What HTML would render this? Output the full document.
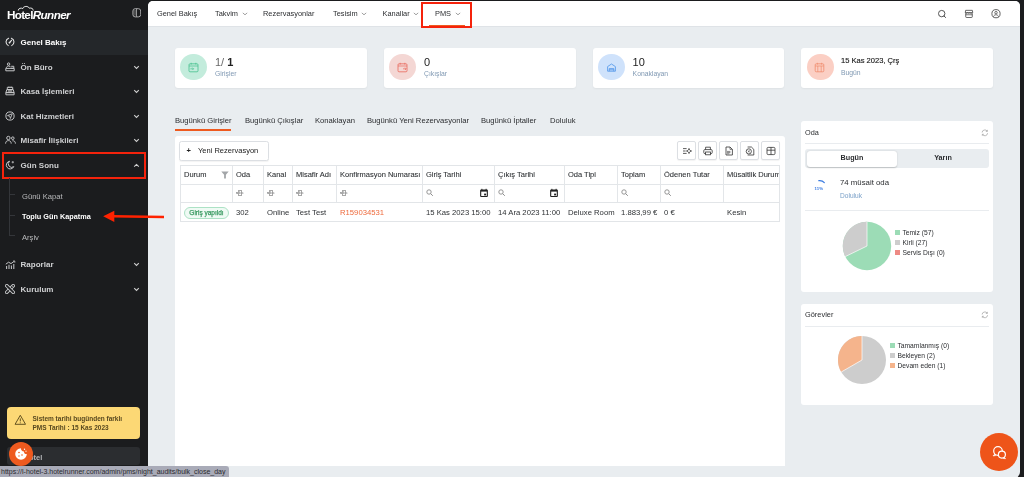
<!DOCTYPE html>
<html lang="tr">
<head>
<meta charset="utf-8">
<title>HotelRunner</title>
<style>
*{box-sizing:border-box;margin:0;padding:0}
html,body{width:1024px;height:477px;overflow:hidden;background:#1b1c1e;font-family:"Liberation Sans",sans-serif;}
.abs{position:absolute}
#side{will-change:transform;position:absolute;left:0;top:0;width:148px;height:477px;background:#1b1c1e;color:#e9e9ea}
#main{will-change:transform;position:absolute;left:148px;top:1px;width:872px;height:477px;background:#e9edf0;border-radius:5px 5px 6px 0;overflow:hidden}
#topbar{position:absolute;left:0;top:0;width:872px;height:26px;background:#fff;border-bottom:1px solid #dfe3e7}
.nav{position:absolute;top:7.7px;font-size:7.4px;color:#2b2d30;white-space:nowrap;line-height:10px}
.nav .cv{display:inline-block;margin-left:3.5px;color:#666}
.mi{position:absolute;left:0;width:148px;height:24px;font-size:8px;font-weight:bold;color:#cfd0d2;line-height:24px;padding-left:20.600px;white-space:nowrap}
.mi svg.ic{position:absolute;left:5px;top:6.5px}
.mi svg.ch{position:absolute;left:132.800px;top:9.200px}
.sub{position:absolute;left:22px;font-size:7.6px;color:#b9babc;line-height:10px;white-space:nowrap}
.card{position:absolute;top:47px;width:192px;height:40px;background:#fff;border-radius:3px;box-shadow:0 1px 2px rgba(0,0,0,.05)}
.card .circ{position:absolute;left:5.4px;top:5.6px;width:26.6px;height:26.6px;border-radius:50%}
.card .big{position:absolute;left:40px;top:8px;font-size:11px;line-height:12px;color:#222;white-space:nowrap}
.card .sm{position:absolute;left:40px;top:22px;font-size:6.8px;line-height:8px;color:#8099b3;white-space:nowrap}
.tab{position:absolute;top:115px;font-size:7.65px;line-height:10px;color:#2b2d30;white-space:nowrap}
.panel{position:absolute;background:#fff;border-radius:3px}
table{border-collapse:collapse}
.th,.td{position:absolute;font-size:7.5px;color:#2e3134;-webkit-text-stroke:0.08px #2e3134;white-space:nowrap;line-height:10px}
.vl{position:absolute;width:1px;background:#e3e6e9}
.hl{position:absolute;height:1px;background:#e3e6e9}
.btn{position:absolute;top:140.3px;width:15px;height:15px;border:1px solid #dcdfe3;border-radius:2px;background:#fff;box-shadow:0 1px 1px rgba(0,0,0,.05)}
.lg{position:absolute;font-size:6.7px;line-height:8px;color:#2b2d30;white-space:nowrap}
.lg i{display:inline-block;width:4.8px;height:4.8px;margin-right:2.7px;vertical-align:0.2px}
.td{font-size:7.7px;-webkit-text-stroke:0}
</style>
</head>
<body>
<div id="side">
  <!-- logo -->
  <div class="abs" style="left:7px;top:8px;font-size:11.7px;line-height:14px;font-weight:bold;color:#fff;letter-spacing:-0.7px;white-space:nowrap">Hotel<span style="font-style:italic;letter-spacing:-0.6px">Runner</span></div>
  <svg class="abs" style="left:16.5px;top:5px" width="17.5" height="6" viewBox="0 0 14 6" preserveAspectRatio="none"><path d="M1 5.5 C1 3.2 3.5 2.6 4.6 3.6 C5 1 9 0.6 9.8 3.2 C11.5 2.6 13 3.6 13 5.5" fill="none" stroke="#fff" stroke-width="0.8"/></svg>
  <svg class="abs" style="left:131.500px;top:8.400px" width="9.600" height="9.600" viewBox="0 0 9.600 9.600"><rect x="0.900" y="0.700" width="7.800" height="8.200" rx="2.300" fill="none" stroke="#b9b9ba" stroke-width="0.900"/><path d="M4.500 0.800v8" stroke="#b9b9ba" stroke-width="0.800"/><path d="M1.400 2h2.700v5.600H1.400z" fill="#b9b9ba" opacity=".3"/></svg>

  <div class="abs" style="left:0;top:30px;width:148px;height:24.700px;background:#24272a"></div>
  <div class="mi" style="top:30.8px;color:#fff">
    <svg class="ic" width="10" height="10" viewBox="0 0 10 10"><path d="M3.300 8.600A4 4 0 0 1 3.600 1.250M6.400 1.250A4 4 0 0 1 6.700 8.600" fill="none" stroke="#e6e6e6" stroke-width="1.050" stroke-linecap="round"/><path d="M4.500 5.700L6.500 3.300" stroke="#e6e6e6" stroke-width="1.200" stroke-linecap="round"/><circle cx="4.500" cy="5.600" r=".9" fill="#e6e6e6"/></svg>
    Genel Bakış</div>
  <div class="mi" style="top:55.8px">
    <svg class="ic" width="10" height="10" viewBox="0 0 10 10"><circle cx="3.6" cy="2.1" r="1.2" fill="none" stroke="#c4c5c7" stroke-width="1"/><path d="M1.2 6.3c.2-1.6 1.2-2.3 2.4-2.3 1 0 1.8.5 2.2 1.3M6.2 4.3h2.6v2H6.2M0.8 6.4h8.4v2.4H0.800z" fill="none" stroke="#c4c5c7" stroke-width="1"/></svg>
    Ön Büro<svg class="ch" width="7" height="5" viewBox="0 0 7 5"><path d="M1.2 1.2l2.3 2.2 2.300-2.200" fill="none" stroke="#d0d0d0" stroke-width="1.100"/></svg></div>
  <div class="mi" style="top:79.8px">
    <svg class="ic" width="10" height="10" viewBox="0 0 10 10"><path d="M2.300 1.300h5.400v2.300H2.300zM1.800 3.600h6.400l.9 3H.9zM.9 6.600h8.200v2.200H.9z" fill="none" stroke="#c4c5c7" stroke-width="1"/><path d="M3.600 .6v1.400M5 .6v1.400M6.400 .6v1.400" stroke="#c4c5c7" stroke-width=".7"/><path d="M3 4.600h4M2.800 5.600h4.400" stroke="#cfcfcf" stroke-width="0.600"/></svg>
    Kasa İşlemleri<svg class="ch" width="7" height="5" viewBox="0 0 7 5"><path d="M1.2 1.2l2.3 2.2 2.300-2.200" fill="none" stroke="#d0d0d0" stroke-width="1.100"/></svg></div>
  <div class="mi" style="top:104.8px">
    <svg class="ic" width="10" height="10" viewBox="0 0 10 10"><circle cx="5" cy="5" r="4.100" fill="none" stroke="#c4c5c7" stroke-width="1"/><path d="M7.300 2.700L2.500 4.600l2.300.6.600 2.300z" fill="none" stroke="#c4c5c7" stroke-width=".9" stroke-linejoin="round"/></svg>
    Kat Hizmetleri<svg class="ch" width="7" height="5" viewBox="0 0 7 5"><path d="M1.2 1.2l2.3 2.2 2.300-2.200" fill="none" stroke="#d0d0d0" stroke-width="1.100"/></svg></div>
  <div class="mi" style="top:128.8px">
    <svg class="ic" width="11" height="10" viewBox="0 0 11 10"><circle cx="3.400" cy="3" r="1.700" fill="none" stroke="#c4c5c7" stroke-width="1"/><path d="M.6 8.600c0-2 1.200-3 2.800-3s2.800 1 2.800 3" fill="none" stroke="#c4c5c7" stroke-width="1"/><circle cx="7.800" cy="3.200" r="1.300" fill="none" stroke="#c4c5c7" stroke-width="1"/><path d="M7.400 5.800c1.800-.3 3 .8 3 2.800" fill="none" stroke="#c4c5c7" stroke-width="1"/></svg>
    Misafir İlişkileri<svg class="ch" width="7" height="5" viewBox="0 0 7 5"><path d="M1.2 1.2l2.3 2.200 2.300-2.200" fill="none" stroke="#d0d0d0" stroke-width="1.100"/></svg></div>
  <div class="mi" style="top:153.8px">
    <svg class="ic" width="10" height="10" viewBox="0 0 10 10"><path d="M4.600 1.200a3.900 3.900 0 1 0 4.200 5.400 3.300 3.300 0 0 1-4.200-5.400z" fill="none" stroke="#c4c5c7" stroke-width="1" stroke-linejoin="round"/><path d="M7.800 1v2.400M6.600 2.200H9" stroke="#cfcfcf" stroke-width="0.700"/></svg>
    Gün Sonu<svg class="ch" width="7" height="5" viewBox="0 0 7 5"><path d="M1.200 3.600l2.300-2.200 2.300 2.200" fill="none" stroke="#d0d0d0" stroke-width="1.100"/></svg></div>
  <!-- red annotation box -->
  <div class="abs" style="left:1.5px;top:152px;width:144.5px;height:27px;border:2.200px solid #f5230c"></div>

  <!-- submenu -->
  <div class="abs" style="left:9px;top:178px;width:1px;height:57px;background:#34363a"></div>
  <div class="abs" style="left:9px;top:194px;width:6px;height:1px;background:#34363a"></div>
  <div class="abs" style="left:9px;top:215px;width:6px;height:1px;background:#34363a"></div>
  <div class="abs" style="left:9px;top:235px;width:6px;height:1px;background:#34363a"></div>
  <div class="sub" style="top:191.8px">Günü Kapat</div>
  <div class="sub" style="top:212px;font-size:7.3px;color:#fff;font-weight:bold">Toplu Gün Kapatma</div>
  <div class="sub" style="top:232.6px">Arşiv</div>

  <div class="mi" style="top:253.2px">
    <svg class="ic" width="11" height="10" viewBox="0 0 11 10"><path d="M.8 4.200l2.800-2 2.400 1.400 3.400-2.400" fill="none" stroke="#c4c5c7" stroke-width="1"/><path d="M1.600 6v3M4 4.800v4.200M6.400 5.600V9M8.800 4v5" stroke="#c4c5c7" stroke-width="1.05"/><path d="M8 1h1.800v1.800" fill="none" stroke="#cfcfcf" stroke-width="0.700"/></svg>
    Raporlar<svg class="ch" width="7" height="5" viewBox="0 0 7 5"><path d="M1.200 1.200l2.300 2.200 2.300-2.200" fill="none" stroke="#d0d0d0" stroke-width="1.100"/></svg></div>
  <div class="mi" style="top:277.8px">
    <svg class="ic" width="10" height="10" viewBox="0 0 10 10"><rect x="3.700" y="-0.900" width="2.600" height="11.800" rx="1.100" transform="rotate(45 5 5)" fill="#1b1c1e" stroke="#c4c5c7" stroke-width="0.950"/><rect x="3.700" y="-0.900" width="2.600" height="11.800" rx="1.100" transform="rotate(-45 5 5)" fill="#1b1c1e" stroke="#c4c5c7" stroke-width="0.950"/><path d="M6.600 1.400l2 2" stroke="#c4c5c7" stroke-width=".8"/></svg>
    Kurulum<svg class="ch" width="7" height="5" viewBox="0 0 7 5"><path d="M1.200 1.200l2.300 2.200 2.300-2.200" fill="none" stroke="#d0d0d0" stroke-width="1.100"/></svg></div>

  <!-- warning -->
  <div class="abs" style="left:7px;top:407px;width:132.600px;height:32px;background:#fcd875;border-radius:4px"></div>
  <svg class="abs" style="left:13.500px;top:414.300px" width="12.600" height="11.600" viewBox="0 0 12 11"><path d="M6 1.200L11 9.800H1z" fill="none" stroke="#5a4a1c" stroke-width="0.900" stroke-linejoin="round"/><path d="M6 4.200v2.800M6 8v.8" stroke="#5a4a1c" stroke-width="0.900"/></svg>
  <div class="abs" style="left:32.500px;top:414px;font-size:6.5px;line-height:9px;font-weight:bold;color:#57481f;white-space:nowrap">Sistem tarihi bugünden farklı<br>PMS Tarihi : 15 Kas 2023</div>

  <!-- hotel box -->
  <div class="abs" style="left:7px;top:447px;width:133px;height:18px;background:#2b2d30;border-radius:3px"></div>
  <div class="abs" style="left:23.5px;top:453px;font-size:7.500px;line-height:10px;font-weight:bold;color:#b5b6b8;white-space:nowrap">Hotel</div>
  <!-- cookie button -->
  <div class="abs" style="left:9px;top:442px;width:24px;height:24px;border-radius:50%;background:#ee5a1f"></div>
  <svg class="abs" style="left:14px;top:447px" width="14" height="14" viewBox="0 0 14 14"><path d="M7 1.200a5.800 5.800 0 1 0 5.800 5.800 2.600 2.600 0 0 1-2.800-2.600A2.800 2.800 0 0 1 7 1.200z" fill="#fff"/><circle cx="5" cy="5.500" r=".8" fill="#ee5a1f"/><circle cx="8" cy="8" r=".8" fill="#ee5a1f"/><circle cx="5" cy="9" r=".7" fill="#ee5a1f"/><circle cx="10.500" cy="2.200" r=".7" fill="#fff"/><circle cx="12" cy="4.200" r=".6" fill="#fff"/></svg>
</div>

<div id="main">
  <div id="topbar">
    <div class="nav" style="left:9px">Genel Bakış</div>
    <div class="nav" style="left:67px">Takvim<span class="cv"><svg width="6" height="4" viewBox="0 0 6 4"><path d="M.8 .9l2.200 1.900L5.200 .9" fill="none" stroke="#777" stroke-width=".7"/></svg></span></div>
    <div class="nav" style="left:115px">Rezervasyonlar</div>
    <div class="nav" style="left:185px">Tesisim<span class="cv"><svg width="6" height="4" viewBox="0 0 6 4"><path d="M.8 .9l2.200 1.900L5.200 .9" fill="none" stroke="#777" stroke-width=".7"/></svg></span></div>
    <div class="nav" style="left:234.500px">Kanallar<span class="cv"><svg width="6" height="4" viewBox="0 0 6 4"><path d="M.8 .9l2.200 1.900L5.200 .9" fill="none" stroke="#777" stroke-width=".7"/></svg></span></div>
    <div class="nav" style="left:287px">PMS<span class="cv"><svg width="6" height="4" viewBox="0 0 6 4"><path d="M.8 .9l2.200 1.900L5.200 .9" fill="none" stroke="#777" stroke-width=".7"/></svg></span></div>
    <div class="abs" style="left:281px;top:23.7px;width:35.5px;height:1.500px;background:#ee5a1f"></div>
    <!-- right icons -->
    <svg class="abs" style="left:789px;top:8px" width="10" height="10" viewBox="0 0 10 10"><circle cx="4.700" cy="4.600" r="3.200" fill="none" stroke="#3a3a3a" stroke-width=".85"/><path d="M7 7l1.600 1.500" stroke="#3a3a3a" stroke-width=".9" stroke-linecap="round"/></svg>
    <svg class="abs" style="left:816px;top:7.600px" width="10" height="9.600" viewBox="0 0 10 10"><path d="M1.500 1.400h7l.4 2.400H1.100z" fill="none" stroke="#3a3a3a" stroke-width=".8" stroke-linejoin="round"/><path d="M1.300 3.900c.6.800 1.700.8 2.300 0 .6.800 1.700.8 2.300 0 .6.800 1.700.8 2.300 0" fill="none" stroke="#3a3a3a" stroke-width=".7"/><path d="M1.600 4.400v3.800c0 .4.300.7.700.7h5.400c.4 0 .7-.3.700-.7V4.400" fill="none" stroke="#3a3a3a" stroke-width=".8"/><path d="M1.600 6h6.800" stroke="#3a3a3a" stroke-width=".7"/></svg>
    <svg class="abs" style="left:842.600px;top:8px" width="10" height="10" viewBox="0 0 10 10"><circle cx="5" cy="4.700" r="4.100" fill="none" stroke="#3a3a3a" stroke-width=".8"/><circle cx="5" cy="3.700" r="1.250" fill="none" stroke="#3a3a3a" stroke-width=".7"/><path d="M2.500 7.600c.4-1.300 1.400-1.800 2.500-1.800s2.100.5 2.500 1.800" fill="none" stroke="#3a3a3a" stroke-width=".7"/></svg>
  </div>
  <!-- red box around PMS -->
  <div class="abs" style="left:272.5px;top:0.8px;width:51.7px;height:26.4px;border:2px solid #f5230c"></div>

  <!-- cards -->
  <div class="card" style="left:27px"><div class="circ" style="background:#c3ecdc"></div>
    <svg class="abs" style="left:13px;top:14px" width="11" height="11" viewBox="0 0 11 11"><rect x="1" y="1.800" width="9" height="8" rx="1" fill="none" stroke="#45c08e" stroke-width=".8"/><path d="M1 4h9M3.200.8v1.800M7.800.8v1.800M2.400 6.800h3M4.400 5.600l1.200 1.200-1.200 1.200" fill="none" stroke="#45c08e" stroke-width=".7"/></svg>
    <div class="big"><span style="color:#6a6a6a">1/</span> <b>1</b></div><div class="sm">Girişler</div></div>
  <div class="card" style="left:236px"><div class="circ" style="background:#f4d7d4"></div>
    <svg class="abs" style="left:13px;top:14px" width="11" height="11" viewBox="0 0 11 11"><rect x="1" y="1.800" width="9" height="8" rx="1" fill="none" stroke="#e9685c" stroke-width=".8"/><path d="M1 4h9M3.200.8v1.800M7.800.8v1.800M6 6.800h3M8 5.600l1.200 1.200L8 8" fill="none" stroke="#e9685c" stroke-width=".7"/></svg>
    <div class="big">0</div><div class="sm">Çıkışlar</div></div>
  <div class="card" style="left:444.600px;width:191.400px"><div class="circ" style="background:#cfe2fb"></div>
    <svg class="abs" style="left:13px;top:14px" width="11" height="11" viewBox="0 0 11 11"><path d="M1.600 4.600L5.500 2l3.900 2.600v4.600H1.600zM3.200 9.200V6.600h4.600v2.600M3.200 7.800h4.600" fill="none" stroke="#4d94ea" stroke-width=".8" stroke-linejoin="round"/></svg>
    <div class="big">10</div><div class="sm">Konaklayan</div></div>
  <div class="card" style="left:653px"><div class="circ" style="background:#fbcfc4;left:6px"></div>
    <svg class="abs" style="left:13px;top:14px" width="11" height="11" viewBox="0 0 11 11"><rect x="1.200" y="1.800" width="8.600" height="8" rx="1" fill="none" stroke="#f08a6c" stroke-width=".8"/><path d="M1.200 4h8.600M3.400.8v1.800M7.600.8v1.800M3.800 4v5.800M7.200 4v5.800" fill="none" stroke="#f08a6c" stroke-width=".7"/></svg>
    <div class="big" style="font-size:7.550px;top:7px;-webkit-text-stroke:0.150px #222">15 Kas 2023, Çrş</div><div class="sm" style="top:21.200px">Bugün</div></div>

  <!-- tabs -->
  <div class="tab" style="left:27px">Bugünkü Girişler</div>
  <div class="tab" style="left:97px">Bugünkü Çıkışlar</div>
  <div class="tab" style="left:167px">Konaklayan</div>
  <div class="tab" style="left:219px">Bugünkü Yeni Rezervasyonlar</div>
  <div class="tab" style="left:333px">Bugünkü İptaller</div>
  <div class="tab" style="left:402px">Doluluk</div>
  <div class="abs" style="left:27px;top:128px;width:56px;height:1.500px;background:#ee5a1f"></div>

  <!-- table panel -->
  <div class="panel" style="left:27px;top:135px;width:610px;height:330px;border-radius:3px 3px 0 0"></div>
  <div class="abs" style="left:31px;top:140px;width:90px;height:19.5px;border:1px solid #dcdfe3;border-radius:2.500px;background:#fff;box-shadow:0 1px 1px rgba(0,0,0,.05);font-size:7.520px;line-height:17.500px;color:#222;white-space:nowrap"><span class="abs" style="left:6.600px;top:0;font-weight:bold">+</span><span class="abs" style="left:18px;top:0">Yeni Rezervasyon</span></div>

  <div class="btn" style="left:529px;width:19px;height:18.7px"><svg class="abs" style="left:4px;top:4px" width="10" height="10" viewBox="0 0 10 10"><path d="M1 2.600h3.600M1 5h2.600M1 7.400h3.600" stroke="#333" stroke-width=".8"/><path d="M7 2.400l.8 1.800 1.800.8-1.800.8L7 7.600l-.8-1.800L4.400 5l1.800-.8z" fill="none" stroke="#333" stroke-width=".7" stroke-linejoin="round"/></svg></div>
  <div class="btn" style="left:550.45px;width:18.5px;height:18.7px"><svg class="abs" style="left:4px;top:4px" width="10" height="10" viewBox="0 0 10 10"><path d="M2.600 3.600V1.200h4.800v2.400" fill="none" stroke="#333" stroke-width=".8"/><rect x=".8" y="3.600" width="8.400" height="4" rx="1" fill="none" stroke="#333" stroke-width=".8"/><rect x="2.600" y="6" width="4.800" height="2.800" fill="#fff" stroke="#333" stroke-width=".8"/></svg></div>
  <div class="btn" style="left:571.40px;width:18.5px;height:18.7px"><svg class="abs" style="left:4px;top:4px" width="10" height="10" viewBox="0 0 10 10"><path d="M2 1h4l2.400 2.400V9H2z" fill="none" stroke="#333" stroke-width=".8" stroke-linejoin="round"/><path d="M3 5.400h3.400M3 6.600h3.400M3 7.800h2.400" stroke="#333" stroke-width=".6"/><path d="M6 1v2.400h2.400" fill="none" stroke="#333" stroke-width=".6"/></svg></div>
  <div class="btn" style="left:592.35px;width:18.5px;height:18.7px"><svg class="abs" style="left:4px;top:4px" width="10" height="10" viewBox="0 0 10 10"><path d="M2.600 1h3.800L8.800 3.400V9H2.600" fill="none" stroke="#333" stroke-width=".8" stroke-linejoin="round"/><circle cx="3.800" cy="5.400" r="2.600" fill="#fff" stroke="#333" stroke-width=".8"/><path d="M3 4.400l1.600 2M4.600 4.400L3 6.400" stroke="#333" stroke-width=".6"/></svg></div>
  <div class="btn" style="left:613.30px;width:18.5px;height:18.7px"><svg class="abs" style="left:4px;top:4px" width="10" height="10" viewBox="0 0 10 10"><rect x="1" y="1.400" width="8" height="7.200" rx="1.200" fill="none" stroke="#333" stroke-width=".8"/><path d="M1 4.200h8M5 1.400v7.200" stroke="#333" stroke-width=".8"/></svg></div>

  <!-- grid -->
  <div class="abs" style="left:32px;top:164px;width:600px;height:38px;border:1px solid #e2e5e8"></div>
  <div class="hl" style="left:32px;top:183px;width:600px"></div>
  <div class="abs" style="left:32px;top:201px;width:600px;height:19.7px;border:1px solid #e2e5e8"></div>
  <div class="vl" style="left:84px;top:165px;height:36px"></div>
  <div class="vl" style="left:115px;top:165px;height:36px"></div>
  <div class="vl" style="left:144px;top:165px;height:36px"></div>
  <div class="vl" style="left:188px;top:165px;height:36px"></div>
  <div class="vl" style="left:274px;top:165px;height:36px"></div>
  <div class="vl" style="left:346px;top:165px;height:36px"></div>
  <div class="vl" style="left:416px;top:165px;height:36px"></div>
  <div class="vl" style="left:469px;top:165px;height:36px"></div>
  <div class="vl" style="left:512px;top:165px;height:36px"></div>
  <div class="vl" style="left:575px;top:165px;height:36px"></div>

  <div class="th" style="left:36px;top:168.9px">Durum</div>
  <svg class="abs" style="left:73px;top:169.700px" width="8" height="8" viewBox="0 0 8 8"><path d="M.3 .6h7.400L4.900 3.800v3.600H3.100V3.800z" fill="#a3a6a9"/></svg>
  <div class="th" style="left:88px;top:168.9px">Oda</div>
  <div class="th" style="left:119px;top:168.9px">Kanal</div>
  <div class="th" style="left:148px;top:168.9px">Misafir Adı</div>
  <div class="th" style="left:192px;top:168.9px">Konfirmasyon Numarası</div>
  <div class="th" style="left:278px;top:168.9px">Giriş Tarihi</div>
  <div class="th" style="left:350px;top:168.9px">Çıkış Tarihi</div>
  <div class="th" style="left:420px;top:168.9px">Oda Tipi</div>
  <div class="th" style="left:473px;top:168.9px">Toplam</div>
  <div class="th" style="left:516px;top:168.9px">Ödenen Tutar</div>
  <div class="abs" style="left:579px;top:168.9px;width:52px;overflow:hidden;height:10px"><div class="th" style="left:0;top:0">Müsaitlik Durumu</div></div>

  <!-- filter row icons -->
  <div class="th" style="left:88px;top:187px;font-size:3.6px;color:#a8a8a8">a<span style="border:0.500px solid #a8a8a8;font-size:2.8px">b</span>c</div>
  <div class="th" style="left:119px;top:187px;font-size:3.6px;color:#a8a8a8">a<span style="border:0.500px solid #a8a8a8;font-size:2.8px">b</span>c</div>
  <div class="th" style="left:148px;top:187px;font-size:3.6px;color:#a8a8a8">a<span style="border:0.500px solid #a8a8a8;font-size:2.8px">b</span>c</div>
  <div class="th" style="left:192px;top:187px;font-size:3.6px;color:#a8a8a8">a<span style="border:0.500px solid #a8a8a8;font-size:2.8px">b</span>c</div>
  <svg class="abs" style="left:278px;top:187.700px" width="8" height="8" viewBox="0 0 8 8"><circle cx="3" cy="3" r="2.200" fill="none" stroke="#8c8c8c" stroke-width=".9"/><path d="M4.600 4.600l2.200 2.200" stroke="#8c8c8c" stroke-width="1"/></svg>
  <svg class="abs" style="left:350px;top:187.700px" width="8" height="8" viewBox="0 0 8 8"><circle cx="3" cy="3" r="2.200" fill="none" stroke="#8c8c8c" stroke-width=".9"/><path d="M4.600 4.600l2.200 2.200" stroke="#8c8c8c" stroke-width="1"/></svg>
  <svg class="abs" style="left:473px;top:187.700px" width="8" height="8" viewBox="0 0 8 8"><circle cx="3" cy="3" r="2.200" fill="none" stroke="#8c8c8c" stroke-width=".9"/><path d="M4.600 4.600l2.200 2.200" stroke="#8c8c8c" stroke-width="1"/></svg>
  <svg class="abs" style="left:516px;top:187.700px" width="8" height="8" viewBox="0 0 8 8"><circle cx="3" cy="3" r="2.200" fill="none" stroke="#8c8c8c" stroke-width=".9"/><path d="M4.600 4.600l2.200 2.200" stroke="#8c8c8c" stroke-width="1"/></svg>
  <svg class="abs" style="left:331px;top:187.300px" width="10" height="10" viewBox="0 0 9 10" preserveAspectRatio="none"><rect x="1" y="1.600" width="7" height="7.400" rx="1" fill="#222"/><rect x="2" y="3.600" width="5" height="4.400" fill="#fff"/><rect x="4.600" y="5.600" width="1.800" height="1.800" fill="#222"/><path d="M2.600.8v1.400M6.400.8v1.400" stroke="#222" stroke-width=".9"/></svg>
  <svg class="abs" style="left:401px;top:187.300px" width="10" height="10" viewBox="0 0 9 10" preserveAspectRatio="none"><rect x="1" y="1.600" width="7" height="7.400" rx="1" fill="#222"/><rect x="2" y="3.600" width="5" height="4.400" fill="#fff"/><rect x="4.600" y="5.600" width="1.800" height="1.800" fill="#222"/><path d="M2.600.8v1.400M6.400.8v1.400" stroke="#222" stroke-width=".9"/></svg>

  <!-- data row -->
  <div class="abs" style="left:36px;top:206px;width:45px;height:12px;border:1px solid #ace2c5;border-radius:6px;background:#effaf4;font-size:6.5px;line-height:10px;-webkit-text-stroke:0.25px #3a9a62;color:#3a9a62;text-align:center;white-space:nowrap">Giriş yapıldı</div>
  <div class="td" style="left:88px;top:207.1px">302</div>
  <div class="td" style="left:119px;top:207.1px">Online</div>
  <div class="td" style="left:148px;top:207.1px">Test Test</div>
  <div class="td" style="left:192px;top:207.1px;color:#ee6a3c">R159034531</div>
  <div class="td" style="left:278px;top:207.1px">15 Kas 2023 15:00</div>
  <div class="td" style="left:350px;top:207.1px">14 Ara 2023 11:00</div>
  <div class="td" style="left:420px;top:207.1px">Deluxe Room</div>
  <div class="td" style="left:473px;top:207.1px">1.883,99 €</div>
  <div class="td" style="left:516px;top:207.1px">0 €</div>
  <div class="td" style="left:579px;top:207.1px">Kesin</div>

  <!-- Oda panel -->
  <div class="panel" style="left:653px;top:119.500px;width:192px;height:171.500px"></div>
  <div class="lg" style="left:657px;top:128px;font-size:7.3px">Oda</div>
  <svg class="abs" style="left:833.400px;top:128px" width="7.700" height="7.700" viewBox="0 0 7 7"><path d="M1 3.200A2.500 2.500 0 0 1 5.600 2M6 3.800A2.500 2.500 0 0 1 1.400 5" fill="none" stroke="#999" stroke-width=".6"/><path d="M5.800.8v1.400H4.400M1.200 6.200V4.800h1.400" fill="none" stroke="#999" stroke-width=".6"/></svg>
  <div class="hl" style="left:657px;top:142px;width:184px;background:#e9ecef"></div>
  <div class="abs" style="left:657px;top:148px;width:184px;height:19px;background:#e9edf0;border-radius:3px"></div>
  <div class="abs" style="left:659px;top:150px;width:90px;height:16px;background:#fff;border-radius:3px;box-shadow:0 0.500px 1.500px rgba(0,0,0,.2)"></div>
  <div class="lg" style="left:659px;top:153.200px;width:90px;text-align:center;font-weight:bold;font-size:7.200px">Bugün</div>
  <div class="lg" style="left:750px;top:153.200px;width:90px;text-align:center;font-weight:bold;font-size:7.200px">Yarın</div>
  <svg class="abs" style="left:667px;top:178px" width="12" height="6" viewBox="0 0 12 6"><path d="M3.800 1.700C5.600 1.500 8 2.100 9.300 3.600" fill="none" stroke="#3a7be0" stroke-width="1.200" stroke-linecap="round"/></svg>
  <div class="lg" style="left:666.6px;top:185px;font-size:4.3px;font-weight:bold;color:#3a7be0;line-height:5px">11%</div>
  <div class="lg" style="left:692px;top:177.3px;font-size:7.8px;line-height:10px">74 müsait oda</div>
  <div class="lg" style="left:692px;top:190.6px;font-size:6.6px;color:#7aa0c8">Doluluk</div>
  <div class="hl" style="left:657px;top:209px;width:184px;background:#e9ecef"></div>
  <svg class="abs" style="left:692.9px;top:219.3px" width="52" height="52" viewBox="0 0 52 52"><circle cx="26" cy="26" r="24.200" fill="#9cdcb6"/><path d="M26 26V1.800A24.200 24.200 0 0 0 4.250 36.600z" fill="#cdcdcd"/><path d="M26 1.800V26L4.250 36.600" fill="none" stroke="#fff" stroke-width=".7"/></svg>
  <div class="lg" style="left:747px;top:228px"><i style="background:#9cdcb6"></i>Temiz (57)</div>
  <div class="lg" style="left:747px;top:238px"><i style="background:#cdcdcd"></i>Kirli (27)</div>
  <div class="lg" style="left:747px;top:248px"><i style="background:#ee8a84"></i>Servis Dışı (0)</div>

  <!-- Görevler panel -->
  <div class="panel" style="left:653px;top:302.5px;width:192px;height:101.5px"></div>
  <div class="lg" style="left:657px;top:310.3px;font-size:7.4px">Görevler</div>
  <svg class="abs" style="left:833.400px;top:310.300px" width="7.700" height="7.700" viewBox="0 0 7 7"><path d="M1 3.200A2.500 2.500 0 0 1 5.600 2M6 3.800A2.500 2.500 0 0 1 1.400 5" fill="none" stroke="#999" stroke-width=".6"/><path d="M5.800.8v1.400H4.400M1.200 6.200V4.800h1.400" fill="none" stroke="#999" stroke-width=".6"/></svg>
  <div class="hl" style="left:657px;top:325px;width:184px;background:#e9ecef"></div>
  <svg class="abs" style="left:689px;top:334px" width="50" height="50" viewBox="0 0 50 50"><circle cx="25" cy="25" r="24" fill="#cdcdcd"/><path d="M25 25V1A24 24 0 0 0 4.220 37z" fill="#f5b48c"/><path d="M25 1V25L4.220 37" fill="none" stroke="#fff" stroke-width=".7"/></svg>
  <div class="lg" style="left:742px;top:341px"><i style="background:#9cdcb6"></i>Tamamlanmış (0)</div>
  <div class="lg" style="left:742px;top:351px"><i style="background:#cdcdcd"></i>Bekleyen (2)</div>
  <div class="lg" style="left:742px;top:361px"><i style="background:#f5b48c"></i>Devam eden (1)</div>

  <!-- chat button -->
  <div class="abs" style="left:831.600px;top:432px;width:38px;height:38px;border-radius:50%;background:#ee5419"></div>
  <svg class="abs" style="left:841.500px;top:441.500px" width="18" height="18" viewBox="0 0 18 18"><circle cx="8" cy="8" r="4.300" fill="none" stroke="#fff" stroke-width="1.200"/><path d="M4.600 11.200l-1.600 1.700 2.700-.3z" fill="#fff" stroke="#fff" stroke-width=".6" stroke-linejoin="round"/><circle cx="11.900" cy="11.600" r="3.500" fill="#ee5419" stroke="#fff" stroke-width="1.200"/><path d="M14.300 14.300l1.300 1.400-2.400-.2z" fill="#fff" stroke="#fff" stroke-width=".6" stroke-linejoin="round"/></svg>
</div>

<!-- red arrow -->
<svg class="abs" style="left:100px;top:208px" width="70" height="16" viewBox="0 0 70 16"><path d="M13 8.3L64 8.9" stroke="#ff2200" stroke-width="2.5"/><path d="M3.200 8.300L14.300 2.800V13.900z" fill="#ff2200"/></svg>

<!-- status url -->
<div class="abs" style="left:0;top:466px;width:229px;height:11px;background:#a9abb8;border-top-right-radius:3px;font-size:7px;line-height:11px;color:#2a2a2e;padding-left:1px;white-space:nowrap;overflow:hidden">https://l-hotel-3.hotelrunner.com/admin/pms/night_audits/bulk_close_day</div>
</body>
</html>
